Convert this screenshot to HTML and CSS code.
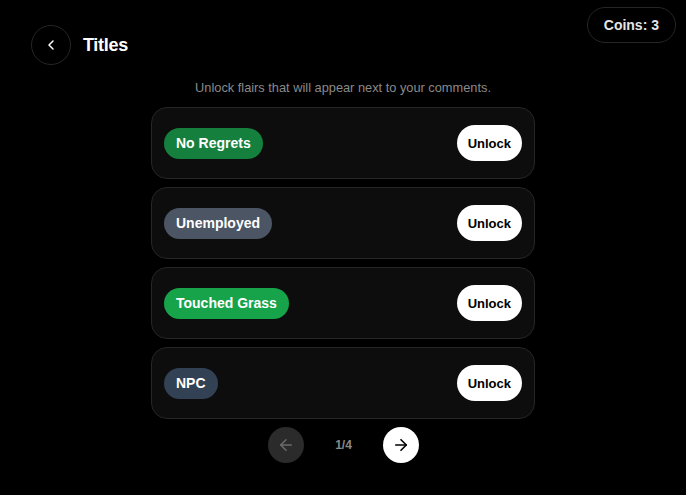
FILE: index.html
```html
<!DOCTYPE html>
<html lang="en">
<head>
  <meta charset="UTF-8" />
  <meta name="viewport" content="width=device-width, initial-scale=1.0"/>
  <title>Titles</title>
  <link rel="stylesheet" href="styles.css">
</head>
<body>
<!-- HEADER -->
<div class="header">
  <button class="back-btn" aria-label="Back">
    <svg width="16" height="16" viewBox="0 0 24 24" fill="none" stroke="currentColor" stroke-width="2.2" stroke-linecap="round" stroke-linejoin="round"><path d="M15 18l-6-6 6-6"/></svg>
  </button>
  <h1>Titles</h1>
</div>
<div class="coins">Coins: 3</div>

<!-- LIST -->
<div class="main">
  <p class="subtitle">Unlock flairs that will appear next to your comments.</p>
  <div class="list">
    <div class="card">
      <span class="flair green-dark">No Regrets</span>
      <button class="unlock-btn">Unlock</button>
    </div>
    <div class="card">
      <span class="flair gray">Unemployed</span>
      <button class="unlock-btn">Unlock</button>
    </div>
    <div class="card">
      <span class="flair green">Touched Grass</span>
      <button class="unlock-btn">Unlock</button>
    </div>
    <div class="card">
      <span class="flair slate">NPC</span>
      <button class="unlock-btn">Unlock</button>
    </div>
  </div>

  <div class="pager">
    <button class="page-btn disabled" aria-label="Previous">
      <svg width="18" height="18" viewBox="0 0 24 24" fill="none" stroke="currentColor" stroke-width="2" stroke-linecap="round" stroke-linejoin="round"><path d="M19 12H5"/><path d="M12 19l-7-7 7-7"/></svg>
    </button>
    <span class="page-num">1/4</span>
    <button class="page-btn" aria-label="Next">
      <svg width="18" height="18" viewBox="0 0 24 24" fill="none" stroke="currentColor" stroke-width="2.2" stroke-linecap="round" stroke-linejoin="round"><path d="M5 12h14"/><path d="M12 5l7 7-7 7"/></svg>
    </button>
  </div>
</div>
</body>
</html>
```

FILE: styles.css
```css
body {
  margin: 0;
  background: #000;
  color: #fff;
  font-family: "Liberation Sans", Arial, sans-serif;
  min-height: 100vh;
}
button {
  font-family: inherit;
  cursor: pointer;
}
.header {
  display: flex;
  align-items: center;
  gap: 12px;
  padding: 25px 0 0 31px;
}
.back-btn {
  width: 40px;
  height: 40px;
  border-radius: 50%;
  border: 1px solid #262626;
  background: #000;
  color: #fff;
  display: flex;
  align-items: center;
  justify-content: center;
  padding: 0;
}
.header h1 {
  margin: 0;
  font-size: 18px;
  font-weight: bold;
  letter-spacing: -0.3px;
}
.coins {
  position: absolute;
  top: 7px;
  right: 10px;
  height: 36px;
  padding: 0 16px;
  box-sizing: border-box;
  border: 1px solid #262626;
  border-radius: 999px;
  display: flex;
  align-items: center;
  font-size: 14px;
  font-weight: bold;
  color: #e5e5e5;
}
.main {
  width: 384px;
  margin: 0 auto;
}
.subtitle {
  margin: 15px 0 11px;
  font-size: 12.8px;
  line-height: 16px;
  color: #8a8a8a;
  text-align: center;
}
.list {
  display: flex;
  flex-direction: column;
  gap: 8px;
}
.card {
  display: flex;
  align-items: center;
  justify-content: space-between;
  padding: 17px 12px;
  background: #0d0d0d;
  border: 1px solid #262626;
  border-radius: 16px;
}
.flair {
  padding: 7px 12px;
  border-radius: 999px;
  font-size: 14px;
  line-height: 17px;
  font-weight: bold;
  color: #fff;
}
.green-dark { background: #15803d; }
.gray { background: #4b5563; }
.green { background: #16a34a; }
.slate { background: #334155; }
.unlock-btn {
  height: 36px;
  padding: 0 11px;
  border: none;
  border-radius: 999px;
  background: #fff;
  color: #000;
  font-size: 13px;
  font-weight: bold;
}
.pager {
  display: flex;
  align-items: center;
  justify-content: center;
  gap: 31px;
  margin-top: 8px;
  padding-left: 1px;
}
.page-btn {
  width: 36px;
  height: 36px;
  border-radius: 50%;
  border: none;
  background: #fff;
  color: #000;
  display: flex;
  align-items: center;
  justify-content: center;
  padding: 0;
}
.page-btn.disabled {
  background: #2b2b2b;
  color: #6b6b6b;
}
.page-num {
  font-size: 12px;
  font-weight: bold;
  color: #8a8a8a;
}
```
